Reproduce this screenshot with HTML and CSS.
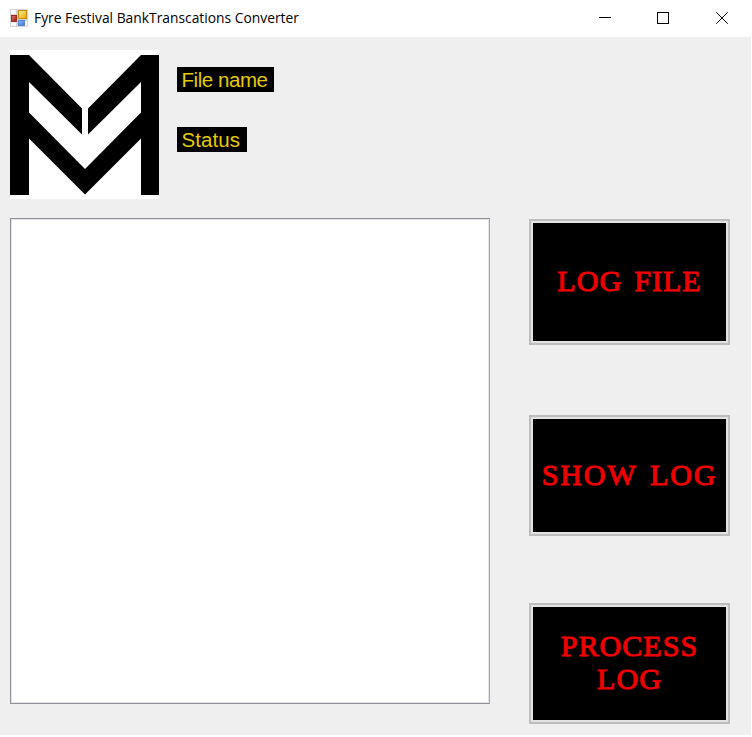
FILE: index.html
```
<!DOCTYPE html>
<html lang="en">
<head>
<meta charset="utf-8">
<title>Fyre Festival BankTranscations Converter</title>
<link rel="stylesheet" href="styles.css">
</head>
<body>
<div class="window">
  <header class="titlebar">
    <svg class="app-icon" width="18" height="18" viewBox="0 0 18 18">
      <defs>
        <linearGradient id="gold" x2="1" y2="1"><stop stop-color="#ffec9a"/><stop offset="1" stop-color="#e9a800"/></linearGradient>
        <linearGradient id="blue" x2="1" y2="1"><stop stop-color="#92bdf6"/><stop offset="1" stop-color="#3e70d4"/></linearGradient>
        <linearGradient id="red" x2="1" y2="1"><stop stop-color="#d9776d"/><stop offset="1" stop-color="#a01710"/></linearGradient>
      </defs>
      <rect width="18" height="18" rx="1" fill="#d3d3d3"/>
      <path d="M1 1h5v4H1zM1 13h5v4H1zM15 12h2v5h-2z" fill="#f7f7f7"/>
      <rect x="1.5" y="6.500" width="5" height="6" fill="url(#red)" stroke="#a52a20"/>
      <rect x="8.500" y="1.500" width="8" height="8" fill="url(#gold)" stroke="#c68c14"/>
      <rect x="8.500" y="11.500" width="6" height="5" fill="url(#blue)" stroke="#5583cf"/>
    </svg>
    <h1 class="title">Fyre Festival BankTranscations Converter</h1>
    <svg class="controls" width="130" height="12" viewBox="0 0 130 12" fill="none" stroke="#000">
      <path d="M0 5.500h12M58.500.5h11v11h-11z" shape-rendering="crispEdges"/>
      <path d="M117.300.3l11.400 11.400M128.700.3l-11.400 11.400"/>
    </svg>
  </header>
  <main class="client">
    <section class="summary">
      <svg class="logo" width="149" height="149" viewBox="0 0 149 149">
        <path fill="#fff" d="M0 0h149v149H0z"/>
        <path d="M0 5h19L72 58.500v26L19 32v30.500L75 119l56-56.500V32L78 84.500v-26L131 5h18v140h-18V88.500L75 144.500 19 88.500V145H0z"/>
      </svg>
      <div class="labels">
        <span class="label label-file">File name</span>
        <span class="label label-status">Status</span>
      </div>
    </section>
    <section class="work">
      <div class="listbox"></div>
      <div class="actions">
        <button class="action action-log"><span class="face"><span class="caption">LOG FILE</span></span></button>
        <button class="action action-show"><span class="face"><span class="caption">SHOW LOG</span></span></button>
        <button class="action action-process"><span class="face"><span class="caption">PROCESS<br>LOG</span></span></button>
      </div>
    </section>
  </main>
</div>
</body>
</html>
```
FILE: styles.css
```
* { box-sizing: border-box; }
body { margin: 0; background: #fff; overflow: hidden; }
.window { width: 751px; height: 735px; display: flex; flex-direction: column; }
.titlebar { height: 37px; flex: none; display: flex; align-items: center; padding: 0 22px 2px 10px; background: #fff; }
.app-icon { flex: none; }
.title { margin: 0 auto 0 6px; padding-bottom: 2px; font: 400 15px/20px "Open Sans", sans-serif; color: #000; white-space: nowrap; transform: scaleX(.922); transform-origin: left; }
.controls { flex: none; }
.client { flex: 1; background: #efefef; padding: 13px 21px 0 10px; }
.summary { display: flex; gap: 17.500px; height: 168px; }
.logo { flex: none; }
.labels { display: flex; flex-direction: column; align-items: flex-start; gap: 35px; padding-top: 17px; }
.label { height: 25px; padding-left: 5px; background: #000; color: #e6cb00; font: 20.500px/26px "Liberation Sans", sans-serif; white-space: nowrap; }
.label-file { width: 97.500px; letter-spacing: -.45px; }
.label-status { width: 70px; letter-spacing: .1px; }
.work { display: flex; justify-content: space-between; }
.listbox { width: 480px; height: 486px; border: 1px solid #8d9099; border-right-color: #a3a5ac; box-shadow: inset 0 0 0 1px #e4e4e8; background: #fff; }
.actions { display: flex; flex-direction: column; width: 201px; padding-top: 1px; }
.action { width: 201px; padding: 2px; border: 2px solid #bdbdbd; background: #e3e3e3; display: flex; }
.action-log { height: 126px; margin-bottom: 70px; }
.action-show { height: 121px; margin-bottom: 67px; }
.action-process { height: 121px; }
.face { flex: 1; align-self: stretch; display: flex; align-items: center; justify-content: center; background: #000; padding-bottom: 3px; }
.caption { font: 400 30px/33px "Liberation Serif", serif; letter-spacing: 1.050px; word-spacing: 3.500px; -webkit-text-stroke: 1px #f00000; color: #f00000; text-align: center; white-space: nowrap; }
.action-show .caption { letter-spacing: 1.900px; }
```
